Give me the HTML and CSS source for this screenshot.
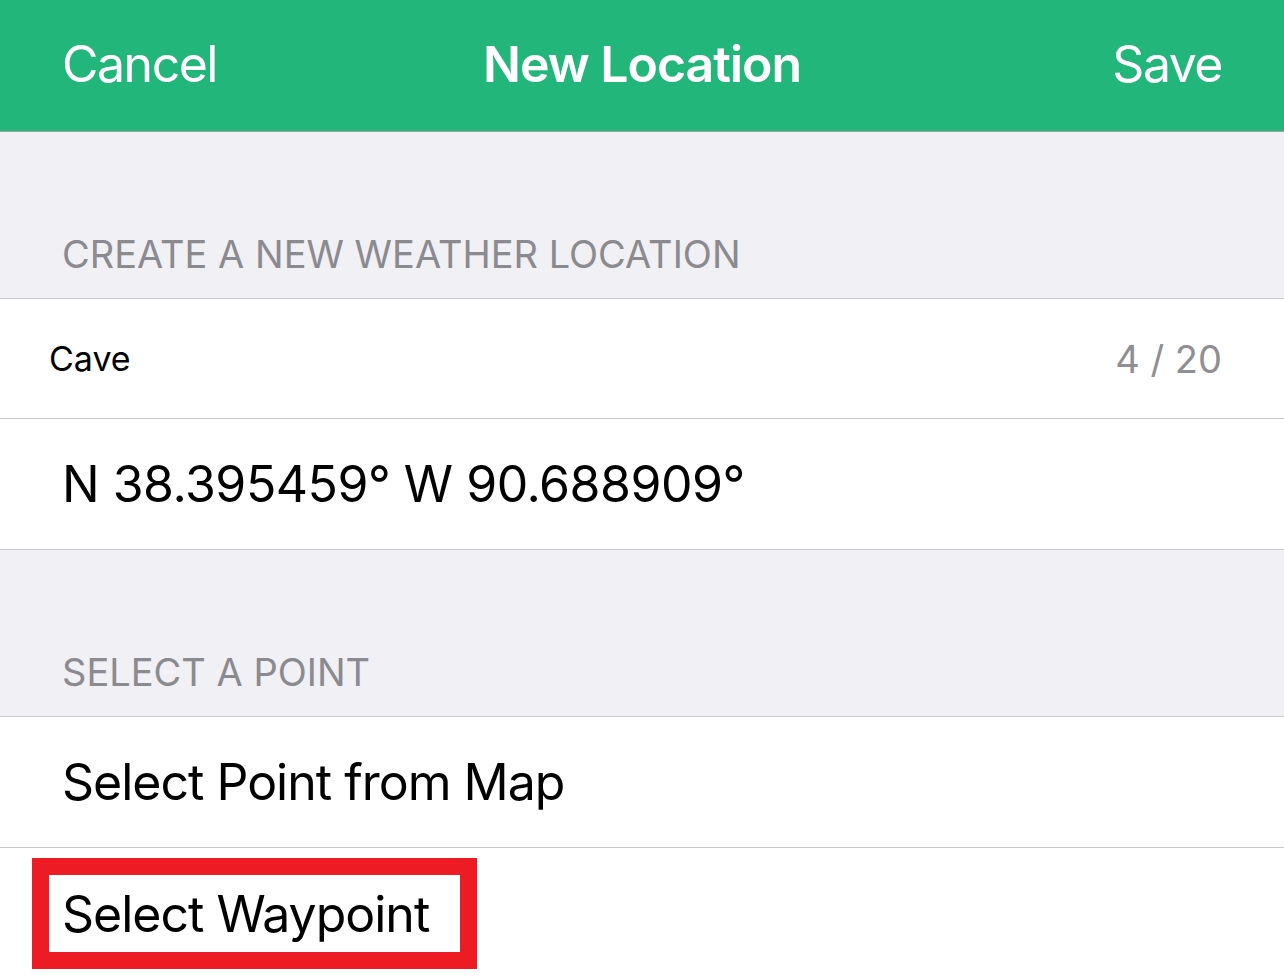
FILE: index.html
```html
<!DOCTYPE html>
<html lang="en">
<head>
  <meta charset="UTF-8">
  <title>New Location</title>
  <link rel="stylesheet" href="styles.css">
</head>
<body>
  <div class="navbar">
    <span class="nav-btn nav-left">Cancel</span>
    <span class="nav-title">New Location</span>
    <span class="nav-btn nav-right">Save</span>
  </div>

  <div class="section-header">CREATE A NEW WEATHER LOCATION</div>
  <div class="group">
    <div class="cell cell-input">
      <span class="input-text">Cave</span>
      <span class="counter">4 / 20</span>
    </div>
    <div class="cell cell-coords">
      <span class="label coords">N 38.395459° W 90.688909°</span>
    </div>
  </div>

  <div class="section-header">SELECT A POINT</div>
  <div class="group">
    <div class="cell cell-tall">
      <span class="label">Select Point from Map</span>
    </div>
    <div class="cell cell-last">
      <span class="label highlight">Select Waypoint</span>
    </div>
  </div>
</body>
</html>
```

FILE: styles.css
```css
* {
  box-sizing: border-box;
}
body {
  margin: 0;
  padding: 0;
  width: 1284px;
  height: 980px;
  overflow: hidden;
  background: #f0f0f5;
  font-family: 'Inter', 'Roboto', sans-serif;
  color: #000;
}
.navbar {
  height: 132px;
  display: grid;
  grid-template-columns: 1fr auto 1fr;
  align-items: center;
  padding: 0 62px 4px;
  background: #22b67b;
  border-bottom: 1px solid #9aa7a1;
  color: #fff;
  font-size: 50px;
  letter-spacing: -0.02em;
}
.nav-btn {
  letter-spacing: -0.03em;
}
.nav-right {
  justify-self: end;
}
.nav-title {
  font-weight: 600;
}
.section-header {
  height: 166px;
  display: flex;
  align-items: flex-end;
  padding: 0 62px 25px;
  font-size: 38px;
  line-height: 1;
  color: #8a8a8f;
}
.group {
  background: #fff;
}
.cell {
  display: flex;
  align-items: center;
  border-top: 1px solid #c8c7cc;
  padding: 0 62px;
  font-size: 50px;
  letter-spacing: -0.02em;
}
.cell-input {
  height: 120px;
  padding-left: 49px;
  justify-content: space-between;
}
.cell-coords {
  height: 132px;
  border-bottom: 1px solid #c8c7cc;
}
.coords {
  letter-spacing: -0.01em;
}
.cell-tall {
  height: 131px;
}
.cell-last {
  height: 140px;
  padding-left: 32px;
  padding-bottom: 8px;
}
.input-text {
  font-size: 34px;
  letter-spacing: 0;
}
.counter {
  font-size: 38px;
  color: #8e8e93;
  letter-spacing: 0;
}
.highlight {
  display: flex;
  align-items: center;
  height: 111px;
  padding: 0 31px 0 13px;
  border: 17px solid #ed1c24;
}
```
